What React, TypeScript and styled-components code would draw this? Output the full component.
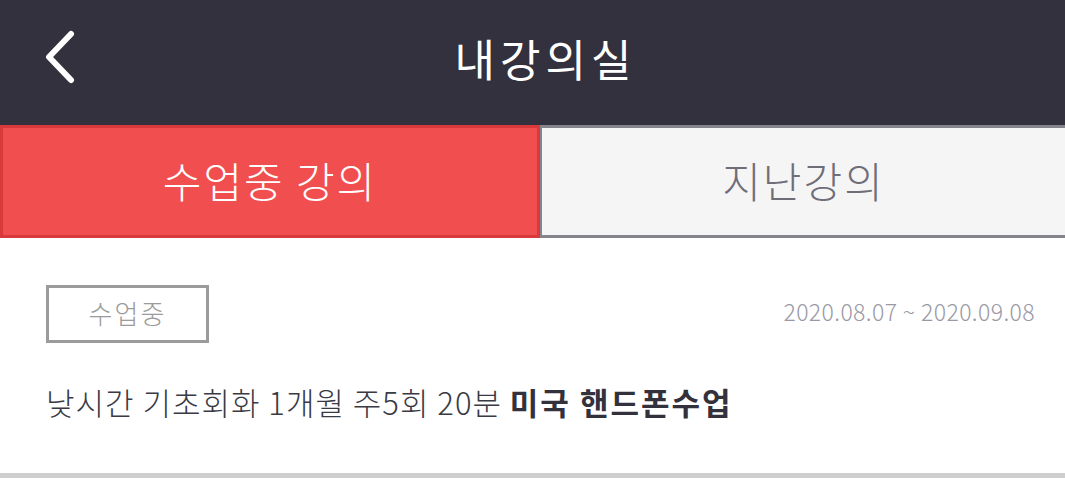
import React from 'react';
import styled, { createGlobalStyle } from 'styled-components';

const GlobalStyle = createGlobalStyle`
  html, body {
    margin: 0;
    padding: 0;
    background: #ffffff;
    font-family: "Noto Sans CJK KR", "Noto Sans", sans-serif;
  }
`;

const Page = styled.div`
  width: 1065px;
  height: 478px;
  overflow: hidden;
  display: flex;
  flex-direction: column;
`;

const Header = styled.header`
  position: relative;
  height: 125px;
  background: #32313d;
  display: flex;
  align-items: center;
  justify-content: center;
`;

const BackButton = styled.button`
  position: absolute;
  left: 38px;
  top: 26px;
  width: 44px;
  height: 62px;
  padding: 0;
  border: none;
  background: transparent;
  display: flex;
  align-items: center;
  justify-content: center;
`;

const Title = styled.h1`
  margin: 0;
  color: #ffffff;
  font-size: 44px;
  font-weight: 400;
  letter-spacing: 5px;
  transform: translate(13px, -5px);
`;

const Tabs = styled.div`
  display: flex;
  height: 113px;
`;

const Tab = styled.div<{ $active?: boolean }>`
  box-sizing: border-box;
  height: 100%;
  display: flex;
  align-items: center;
  justify-content: center;
  font-size: 42px;
  font-weight: 300;
  letter-spacing: 2px;
  padding-bottom: 4px;
  ${(p) =>
    p.$active
      ? `
    width: 540px;
    background: #f14f4f;
    border: 3px solid #d83a3c;
    color: #ffffff;
  `
      : `
    flex: 1;
    background: #f5f5f5;
    border-top: 3px solid #85848d;
    border-bottom: 3px solid #85848d;
    border-left: 2px solid #85848d;
    color: #6f6e78;
  `}
`;

const Item = styled.div`
  flex: 1;
  padding: 47px 30px 0 46px;
  border-bottom: 5px solid #cfcfcf;
`;

const ItemTop = styled.div`
  display: flex;
  align-items: center;
  justify-content: space-between;
`;

const StatusTag = styled.span`
  box-sizing: border-box;
  width: 163px;
  height: 58px;
  border: 3px solid #9b9b9b;
  display: flex;
  align-items: center;
  justify-content: center;
  color: #9b9b9b;
  font-size: 26px;
  font-weight: 300;
  letter-spacing: 2px;
  padding-bottom: 3px;
`;

const Period = styled.span`
  color: #9a99a5;
  font-size: 23px;
  font-weight: 300;
  letter-spacing: 0.4px;
  margin-bottom: 6px;
`;

const CourseName = styled.div`
  margin-top: 36px;
  color: #3a3a44;
  font-size: 31px;
  font-weight: 300;
  letter-spacing: 1px;
  white-space: nowrap;

  strong {
    font-weight: 700;
    color: #33323c;
    letter-spacing: 2px;
  }
`;

const BackIcon = () => (
  <svg width="36" height="58" viewBox="0 0 36 58">
    <path
      d="M29 6 L7 29 L29 52"
      fill="none"
      stroke="#ffffff"
      strokeWidth="6"
      strokeLinecap="round"
      strokeLinejoin="round"
    />
  </svg>
);

export default function App() {
  return (
    <>
      <GlobalStyle />
      <Page>
        <Header>
          <BackButton aria-label="뒤로">
            <BackIcon />
          </BackButton>
          <Title>내강의실</Title>
        </Header>
        <Tabs>
          <Tab $active>수업중 강의</Tab>
          <Tab>지난강의</Tab>
        </Tabs>
        <Item>
          <ItemTop>
            <StatusTag>수업중</StatusTag>
            <Period>2020.08.07 ~ 2020.09.08</Period>
          </ItemTop>
          <CourseName>
            낮시간 기초회화 1개월 주5회 20분 <strong>미국 핸드폰수업</strong>
          </CourseName>
        </Item>
      </Page>
    </>
  );
}
